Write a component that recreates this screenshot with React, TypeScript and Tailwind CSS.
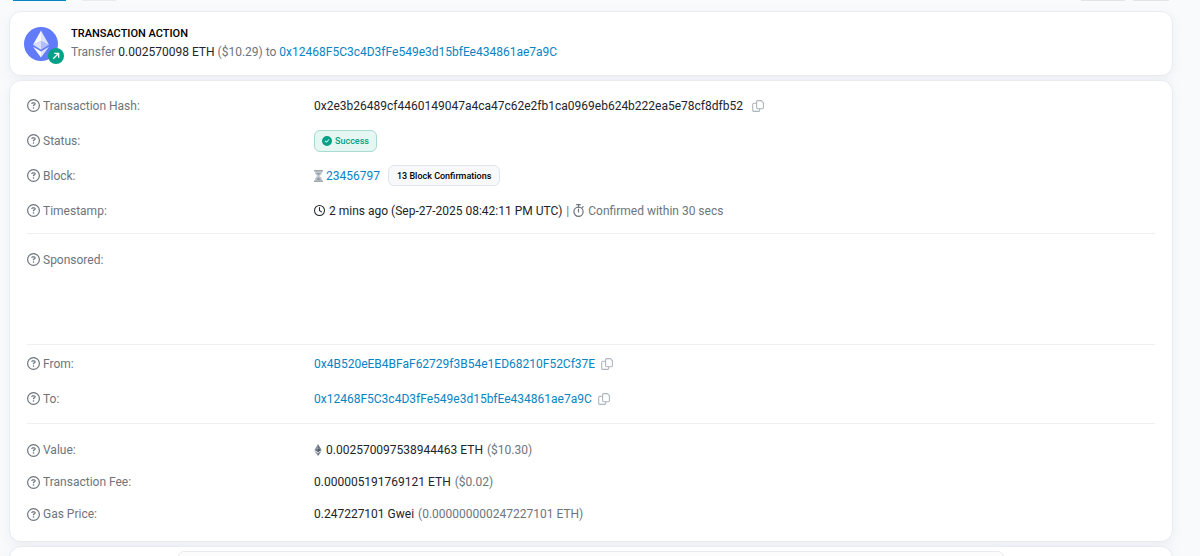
import type { ReactNode } from "react"
import {
  FaCircleCheck,
  FaRegCircleQuestion,
  FaRegClock,
} from "react-icons/fa6"

const HASH = "0x2e3b26489cf4460149047a4ca47c62e2fb1ca0969eb624b222ea5e78cf8dfb52"
const FROM = "0x4B520eEB4BFaF62729f3B54e1ED68210F52Cf37E"
const TO = "0x12468F5C3c4D3fFe549e3d15bfEe434861ae7a9C"

function EthLogo() {
  return (
    <svg viewBox="0 0 34 34" className="size-[34px]" aria-hidden="true">
      <circle cx="17" cy="17" r="17" fill="#627bfa" />
      <path d="M17 3.5 9 17.800 17 14.1z" fill="#fff" fillOpacity=".95" />
      <path d="M17 3.5 25 17.800 17 14.1z" fill="#fff" fillOpacity=".8" />
      <path d="M9 17.800 17 14.1v8.600z" fill="#fff" fillOpacity=".75" />
      <path d="M25 17.800 17 14.1v8.600z" fill="#fff" fillOpacity=".5" />
      <path d="M9 19.8 17 24.500v6z" fill="#fff" />
      <path d="M25 19.8 17 24.500v6z" fill="#fff" fillOpacity=".8" />
    </svg>
  )
}

function EthMark() {
  return (
    <svg viewBox="0 0 8 12" className="h-3 w-2 shrink-0" aria-hidden="true">
      <path d="M4 0 .4 6 4 4.6z" fill="#8a92a0" />
      <path d="M4 0 7.6 6 4 4.6z" fill="#6c7581" />
      <path d="M.4 6 4 4.6v3.6z" fill="#6c757d" />
      <path d="M7.6 6 4 4.6v3.6z" fill="#4f5763" />
      <path d="M.4 7 4 9.1V12z" fill="#8a92a0" />
      <path d="M7.6 7 4 9.1V12z" fill="#6c7581" />
    </svg>
  )
}

function Hourglass() {
  return (
    <svg viewBox="0 0 9 12" className="h-3 w-[9px] shrink-0" aria-hidden="true">
      <path d="M1 1h7v1.6C8 4.4 6.4 5.2 5.6 6 6.4 6.8 8 7.6 8 9.4V11H1V9.4C1 7.6 2.6 6.8 3.4 6 2.6 5.2 1 4.4 1 2.6z" fill="#c3c9cf" />
      <path d="M2.2 3h4.6L4.5 5.6zM4.5 6.8 7 10H2z" fill="#9aa2a9" />
      <path d="M0 0h9v1.5H0zM0 10.5h9V12H0z" fill="#a3abb2" />
    </svg>
  )
}

function Stopwatch() {
  return (
    <svg viewBox="0 0 11 13" className="h-[13px] w-[11px] shrink-0" fill="none" stroke="currentColor" strokeLinecap="round" aria-hidden="true">
      <circle cx="5.5" cy="7.7" r="4.6" strokeWidth="1.2" />
      <path d="M3.7.7h3.6M5.5.7v2.2M5.5 5.2v2.8M9.2 3.5l.9-.9" strokeWidth="1.2" />
    </svg>
  )
}

function CopyButton({ label }: { label: string }) {
  return (
    <button type="button" aria-label={label} className="ml-[2px] shrink-0 text-[#adb5bd]">
      <svg viewBox="0 0 12 12" className="size-3" fill="none" stroke="currentColor" strokeWidth="1.1" aria-hidden="true">
        <path d="M5.700.6h3.600l2.100 2.100v4.900a1.100 1.100 0 0 1-1.100 1.100H5.700a1.100 1.100 0 0 1-1.100-1.100V1.700A1.100 1.100 0 0 1 5.700.6z" />
        <path d="M4.600 3.300H1.900A1.200 1.200 0 0 0 .7 4.500v5.700a1.200 1.200 0 0 0 1.200 1.200h4.500a1.200 1.200 0 0 0 1.200-1.200V8.700" />
      </svg>
    </button>
  )
}

function Row({ label, children, className = "h-[35px]" }: { label: string; children?: ReactNode; className?: string }) {
  return (
    <div className={`flex items-center ${className}`}>
      <dt className="flex w-1/4 shrink-0 items-center gap-[3px] text-[#6c757d]">
        <FaRegCircleQuestion className="size-[13px]" />
        {label}:
      </dt>
      <dd className="flex min-w-0 flex-1 items-center gap-1 pl-[5px] text-[#212529]">{children}</dd>
    </div>
  )
}

const card = "rounded-xl border border-[#e9ecef] bg-white shadow-[0_4px_12px_rgba(189,197,209,0.2)]"
const link = "text-[#0784c3]"

export default function App() {
  return (
    <div className="h-screen overflow-hidden bg-[#f9fafc] pr-[27px] pl-[9px] font-['Roboto',sans-serif] text-[12px] leading-5">
      <div className="flex justify-between px-1">
        <div className="flex gap-4">
          <div className="h-px w-[53px] bg-[#0784c3]" />
          <div className="h-px w-[34px] bg-[#e9ecef]" />
        </div>
        <div className="flex gap-2">
          <div className="h-px w-11 bg-[#e1e5e9]" />
          <div className="h-px w-9 bg-[#e1e5e9]" />
        </div>
      </div>

      <section className={`mt-[10px] flex h-[65px] items-center gap-[13px] px-[14px] ${card}`}>
        <div className="relative">
          <EthLogo />
          <span className="absolute -right-[6px] -bottom-[3px] flex size-4 items-center justify-center rounded-full bg-[#00a186] text-white">
            <svg viewBox="0 0 8 8" className="size-2" fill="none" stroke="currentColor" strokeWidth="1.3" aria-hidden="true">
              <path d="M1.200 6.800 6.500 1.500M2.300 1.300h4.400v4.400" />
            </svg>
          </span>
        </div>
        <div>
          <h2 className="text-[11px] leading-4 font-medium text-black">TRANSACTION ACTION</h2>
          <p className="text-[#6c757d]">
            Transfer <span className="text-[#212529]">0.002570098 ETH</span> ($10.29) to{" "}
            <a href="#to" className={link}>{TO}</a>
          </p>
        </div>
      </section>

      <section className={`mt-1 px-[17px] pt-[7px] pb-[11px] ${card}`}>
        <dl>
          <Row label="Transaction Hash">
            <span className="mr-[3px]">{HASH}</span>
            <CopyButton label="Copy transaction hash" />
          </Row>
          <Row label="Status">
            <span className="flex h-[22px] items-center gap-[3px] rounded-md border border-[#a6dcd2] bg-[#e6f6f3] px-[7px] text-[9px] font-medium text-[#00a186]">
              <FaCircleCheck className="size-[10px]" />
              Success
            </span>
          </Row>
          <Row label="Block">
            <span className="flex items-center gap-[3px]">
              <Hourglass />
              <a href="#block" className={link}>23456797</a>
            </span>
            <span className="ml-1 flex h-[21px] items-center rounded-md border border-[#e1e5e9] bg-[#f8f9fa] px-2 text-[9px] font-medium text-black">
              13 Block Confirmations
            </span>
          </Row>
          <Row label="Timestamp">
            <FaRegClock className="size-[11px]" />
            <span>2 mins ago (Sep-27-2025 08:42:11 PM UTC)</span>
            <span className="text-[#6c757d]">|</span>
            <span className="flex items-center gap-1 text-[#6c757d]">
              <Stopwatch />
              Confirmed within 30 secs
            </span>
          </Row>
        </dl>
        <hr className="mt-[5px] border-[#eef0f2]" />
        <dl className="h-[110px] pt-2">
          <Row label="Sponsored" />
        </dl>
        <hr className="border-[#eef0f2]" />
        <dl className="pt-px pb-[7px]">
          <Row label="From">
            <a href="#from" className={link}>{FROM}</a>
            <CopyButton label="Copy sender address" />
          </Row>
          <Row label="To">
            <a href="#to" className={link}>{TO}</a>
            <CopyButton label="Copy recipient address" />
          </Row>
        </dl>
        <hr className="border-[#eef0f2]" />
        <dl className="pt-[10px]">
          <Row label="Value" className="h-8">
            <EthMark />
            <span>0.002570097538944463 ETH</span>
            <span className="text-[#6c757d]">($10.30)</span>
          </Row>
          <Row label="Transaction Fee" className="h-8">
            <span>0.000005191769121 ETH</span>
            <span className="text-[#6c757d]">($0.02)</span>
          </Row>
          <Row label="Gas Price" className="h-8">
            <span>0.247227101 Gwei</span>
            <span className="text-[#6c757d]">(0.000000000247227101 ETH)</span>
          </Row>
        </dl>
      </section>

      <section className={`mt-1 h-20 px-[168px] pt-1 ${card}`}>
        <div className="h-16 rounded-md border border-[#e9ecef] bg-[#fcfcfd]" />
      </section>
    </div>
  )
}
